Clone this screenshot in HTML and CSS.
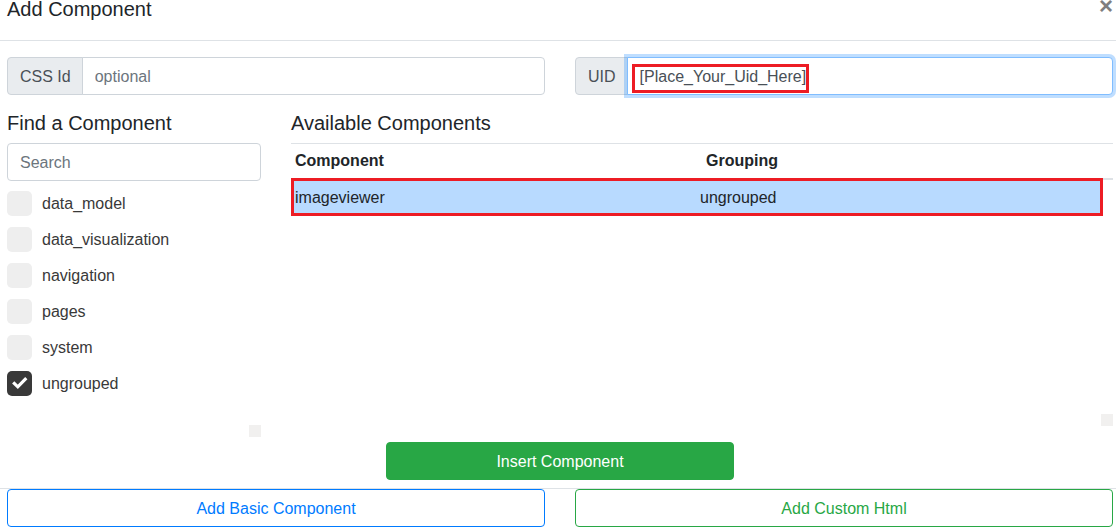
FILE: index.html
```html
<!DOCTYPE html>
<html lang="en">
<head>
<meta charset="utf-8">
<title>Add Component</title>
<link rel="stylesheet" href="styles.css">
</head>
<body>
<header class="header">
  <h1 class="title">Add Component</h1>
  <button class="close" type="button" aria-label="Close">×</button>
</header>
<main>
  <div class="row fields">
    <div class="half group">
      <label class="prefix" for="css-id">CSS Id</label>
      <input class="control" id="css-id" type="text" placeholder="optional">
    </div>
    <div class="half group">
      <label class="prefix" for="uid">UID</label>
      <input class="control active" id="uid" type="text" value="[Place_Your_Uid_Here]">
      <span class="uid-mark"></span>
    </div>
  </div>
  <div class="row browser">
    <section class="finder">
      <h2 class="title"><label for="search">Find a Component</label></h2>
      <input class="control search" id="search" type="search" placeholder="Search">
      <div class="filters">
        <label class="filter"><input class="check" type="checkbox"><span>data_model</span></label>
        <label class="filter"><input class="check" type="checkbox"><span>data_visualization</span></label>
        <label class="filter"><input class="check" type="checkbox"><span>navigation</span></label>
        <label class="filter"><input class="check" type="checkbox"><span>pages</span></label>
        <label class="filter"><input class="check" type="checkbox"><span>system</span></label>
        <label class="filter"><span class="tick"><input class="check" type="checkbox" checked><svg class="tick-icon" viewBox="0 0 25 25" aria-hidden="true"><path d="M6.2 11.4 L10.8 15.8 L19.3 7.2" fill="none" stroke="#fff" stroke-width="3.2"/></svg></span><span>ungrouped</span></label>
      </div>
      <span class="corner"></span>
    </section>
    <section class="available">
      <h2 class="title">Available Components</h2>
      <table class="table">
        <thead><tr><th scope="col">Component</th><th scope="col">Grouping</th></tr></thead>
        <tbody><tr class="selected"><td>imageviewer</td><td>ungrouped</td></tr></tbody>
      </table>
      <span class="corner"></span>
    </section>
  </div>
  <div class="row insert">
    <button class="btn solid" type="button">Insert Component</button>
  </div>
</main>
<footer class="row footer">
  <button class="btn blue half" type="button">Add Basic Component</button>
  <button class="btn green half" type="button">Add Custom Html</button>
</footer>
</body>
</html>
```
FILE: styles.css
```css
* { box-sizing: border-box; }

body {
  margin: 0;
  background: #fff;
  color: #212529;
  font: 16px/24px "Liberation Sans", Arial, sans-serif;
}

button, input { font: inherit; }

.header {
  display: flex;
  justify-content: space-between;
  align-items: flex-start;
  padding: 0 3px 22px 7px;
  border-bottom: 1px solid #dee2e6;
}

.title {
  margin: 0;
  font-size: 20px;
  font-weight: 400;
  line-height: 24px;
}

.header .title { line-height: 18px; }

.close {
  padding: 0;
  border: 0;
  background: none;
  color: #7f7f7f;
  font-size: 24px;
  font-weight: 700;
  line-height: 12px;
}

.row {
  display: grid;
  grid-template-columns: repeat(12, minmax(0, 1fr));
  column-gap: 30px;
  padding: 0 3px 0 7px;
}

.half { grid-column: span 6; }

.fields { margin: 16px 0; }

.group {
  position: relative;
  display: flex;
}

.prefix {
  padding: 7px 12px 5px;
  border: 1px solid #ced4da;
  border-radius: 4px 0 0 4px;
  background: #e9ecef;
  color: #495057;
}

.control {
  display: block;
  flex: 1;
  width: 100%;
  min-width: 0;
  height: 38px;
  margin: 0;
  padding: 7px 12px 5px;
  border: 1px solid #ced4da;
  border-radius: 4px;
  outline: 0;
  background: #fff;
  color: #495057;
  appearance: none;
}

.control::placeholder { color: #6c757d; opacity: 1; }

.group .control {
  margin-left: -2px;
  border-radius: 0 4px 4px 0;
}

.group .active {
  border-color: #80bdff;
  box-shadow: 0 0 0 3px rgba(0, 123, 255, 0.25);
}

.uid-mark {
  position: absolute;
  top: 7px;
  left: 57px;
  width: 177px;
  height: 29px;
  border: 3px solid #ed1c24;
  pointer-events: none;
}

.finder, .available {
  display: flex;
  flex-direction: column;
}

.finder { grid-column: span 3; }

.available {
  grid-column: span 9;
  padding-bottom: 11px;
}

.finder .title, .available .title { margin-bottom: 8px; }

.search { flex: none; }

.filters {
  display: flex;
  flex-direction: column;
  gap: 11px;
  padding: 10px 0 29px;
}

.filter {
  display: flex;
  align-items: center;
  gap: 10px;
  color: #393939;
  line-height: 25px;
}

.check {
  display: block;
  width: 25px;
  height: 25px;
  margin: 0;
  border-radius: 5px;
  background: #eee;
  appearance: none;
}

.check:checked { background: #393939; }

.tick { position: relative; }

.tick-icon {
  position: absolute;
  inset: 0;
  pointer-events: none;
}

.corner {
  width: 12px;
  height: 12px;
  margin-top: auto;
  align-self: flex-end;
  background: #f1f0ef;
}

.table {
  display: block;
  border-top: 1px solid #dee2e6;
}

.table thead, .table tbody { display: block; }

.table tr {
  display: grid;
  grid-template-columns: 1fr 1fr;
}

.table th, .table td {
  padding: 5px 4px;
  text-align: left;
}

.table td { padding: 6px 4px 4px; }

.table thead { border-bottom: 2px solid #dee2e6; }

.table .selected {
  position: relative;
  margin-right: 12px;
  background: #b8daff;
}

.selected::after {
  content: "";
  position: absolute;
  inset: -2px -2px -2px 0;
  border: 3px solid #ed1c24;
  pointer-events: none;
}

.insert { padding-top: 5px; }

.btn {
  padding: 7px 12px 5px;
  border: 1px solid;
  border-radius: 4px;
  background: #fff;
  line-height: 24px;
}

.solid {
  grid-column: 5 / span 4;
  border-color: #28a745;
  background: #28a745;
  color: #fff;
}

.blue { border-color: #007bff; color: #007bff; }

.green { border-color: #28a745; color: #28a745; }

.footer {
  margin-top: 8px;
  border-top: 1px solid #dee2e6;
}
```
